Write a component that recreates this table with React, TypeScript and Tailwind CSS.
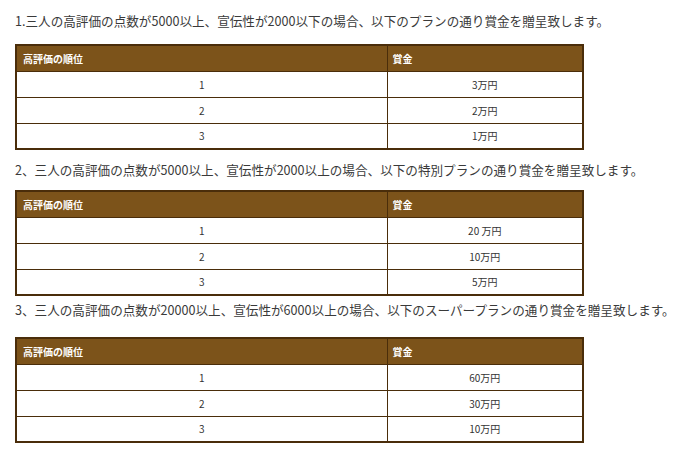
const plans = [
  {
    title: "1.三人の高評価の点数が5000以上、宣伝性が2000以下の場合、以下のプランの通り賞金を贈呈致します。",
    prizes: ["3万円", "2万円", "1万円"],
    pClass: "mt-[11px] mb-[13px]",
  },
  {
    title: "2、三人の高評価の点数が5000以上、宣伝性が2000以上の場合、以下の特別プランの通り賞金を贈呈致します。",
    prizes: ["20 万円", "10万円", "5万円"],
    pClass: "mt-[10px] mb-[10px]",
  },
  {
    title: "3、三人の高評価の点数が20000以上、宣伝性が6000以上の場合、以下のスーパープランの通り賞金を贈呈致します。",
    prizes: ["60万円", "30万円", "10万円"],
    pClass: "mt-[4px] mb-[17px]",
  },
];

const PrizeTable = ({ prizes }: { prizes: string[] }) => {
  return (
    <table className="w-[569px] border-collapse border-2 border-[#4a2d0a] text-[10px]">
      <thead>
        <tr className="h-[26px] bg-[#7c531a] text-white font-bold text-left">
          <th className="w-[371px] border border-[#4a2d0a] px-[6px]">高評価の順位</th>
          <th className="border border-[#4a2d0a] px-[5px]">賞金</th>
        </tr>
      </thead>
      <tbody className="text-[#333]">
        {prizes.map((p, i) => (
          <tr key={i} className="h-[26px] bg-white text-center">
            <td className="border border-[#4a2d0a]">{i + 1}</td>
            <td className="border border-[#4a2d0a]">{p}</td>
          </tr>
        ))}
      </tbody>
    </table>
  );
};

export default function App() {
  return (
    <div className="w-[679px] h-[450px] bg-white pl-[15px] overflow-hidden font-['Noto_Sans_CJK_JP',sans-serif] flow-root">
      {plans.map((plan, i) => (
        <section key={i}>
          <p className={`${plan.pClass} text-[12.6px] leading-[20px] text-[#3a3a3a] whitespace-nowrap`}>{plan.title}</p>
          <PrizeTable prizes={plan.prizes} />
        </section>
      ))}
    </div>
  );
}
